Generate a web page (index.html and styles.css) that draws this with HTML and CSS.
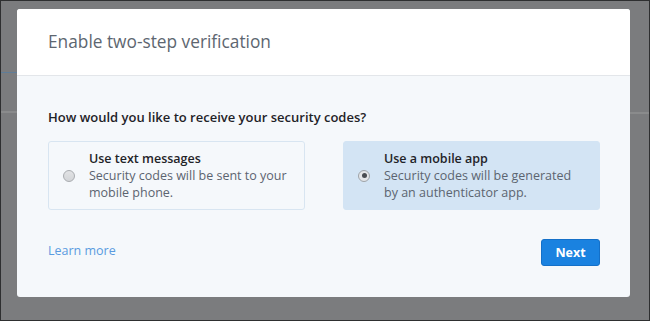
FILE: index.html
```html
<!DOCTYPE html>
<html>
<head>
<meta charset="utf-8">
<link rel="stylesheet" href="styles.css">
</head>
<body>
<div class="page">
  <div class="bg-line bg-line-blue"></div>
  <div class="bg-line bg-line-gray-left"></div>
  <div class="bg-line bg-line-gray-right"></div>
  <div class="modal">
    <div class="modal-header">
      <h1 class="modal-title">Enable two-step verification</h1>
    </div>
    <div class="modal-body">
      <p class="question">How would you like to receive your security codes?</p>
      <div class="options">
        <label class="option">
          <span class="radio"></span>
          <span class="option-text">
            <span class="option-title">Use text messages</span>
            <span class="option-desc">Security codes will be sent to your mobile phone.</span>
          </span>
        </label>
        <label class="option option-selected">
          <span class="radio radio-checked"></span>
          <span class="option-text">
            <span class="option-title">Use a mobile app</span>
            <span class="option-desc">Security codes will be generated by an authenticator app.</span>
          </span>
        </label>
      </div>
      <div class="footer">
        <a class="learn-more" href="#">Learn more</a>
        <button class="btn-next">Next</button>
      </div>
    </div>
  </div>
</div>
</body>
</html>
```
FILE: styles.css
```css
html, body {
  margin: 0;
  padding: 0;
}
body {
  font-family: "Open Sans", "DejaVu Sans", sans-serif;
  background: #7b7c7e;
}
.page {
  position: relative;
  width: 650px;
  height: 321px;
  box-sizing: border-box;
  border: 1px solid #2e2f30;
  background: #7b7c7e;
  overflow: hidden;
  padding-top: 8px;
}
.bg-line {
  position: absolute;
  height: 1px;
}
.bg-line-blue {
  left: 0;
  top: 71px;
  width: 17px;
  background: #5f7d98;
}
.bg-line-gray-left {
  left: 0;
  top: 110px;
  width: 17px;
  height: 2px;
  background: #8a8b8c;
}
.bg-line-gray-right {
  right: 0;
  top: 111px;
  width: 20px;
  height: 2px;
  background: #8a8b8c;
}
.modal {
  position: relative;
  margin-left: 16px;
  width: 613px;
  height: 288px;
  border-radius: 3px;
  overflow: hidden;
  background: #f5f8fb;
  display: flex;
  flex-direction: column;
}
.modal-header {
  height: 66px;
  background: #ffffff;
  border-bottom: 1px solid #e3e6ea;
  padding-left: 31px;
  display: flex;
  align-items: center;
  box-sizing: content-box;
}
.modal-title {
  margin: 0;
  font-size: 17.3px;
  font-weight: 400;
  color: #5d6670;
  line-height: 22px;
}
.modal-body {
  flex: 1;
  padding: 32px 30px 0 31px;
}
.question {
  margin: 0;
  font-size: 13px;
  font-weight: 600;
  line-height: 18px;
  color: #1f2328;
}
.options {
  display: flex;
  gap: 38px;
  margin-top: 15px;
}
.option {
  flex: 1;
  display: flex;
  align-items: center;
  height: 69px;
  box-sizing: border-box;
  border: 1px solid #d8e5f1;
  border-radius: 3px;
  background: #f5f8fb;
  padding: 8px 16px 8px 14px;
}
.option-selected {
  background: #d3e4f4;
  border-color: #d3e4f4;
}
.radio {
  flex: none;
  width: 12px;
  height: 12px;
  box-sizing: border-box;
  border-radius: 50%;
  border: 1px solid #a9acb0;
  background: linear-gradient(#e2e3e5, #d3d5d8);
  margin-right: 14px;
  position: relative;
}
.radio-checked {
  background: #e4e6e9;
  border-color: #9ea3a8;
}
.radio-checked::after {
  content: "";
  position: absolute;
  left: 2.5px;
  top: 2.5px;
  width: 5px;
  height: 5px;
  border-radius: 50%;
  background: #4a4d52;
}
.option-text {
  display: flex;
  flex-direction: column;
  font-size: 12.5px;
  line-height: 17px;
}
.option-title {
  font-weight: 600;
  color: #1f2328;
}
.option-desc {
  color: #5c6470;
}
.footer {
  display: flex;
  justify-content: space-between;
  align-items: center;
  margin-top: 29px;
}
.learn-more {
  font-size: 12.5px;
  color: #5a9be0;
  text-decoration: none;
  line-height: 17px;
  margin-top: -5px;
}
.btn-next {
  width: 59px;
  height: 27px;
  border: 1px solid #1470c8;
  border-radius: 3px;
  background: #1a82e0;
  color: #ffffff;
  font-family: "Open Sans", sans-serif;
  font-size: 12.5px;
  font-weight: 700;
  padding: 0;
}
```
